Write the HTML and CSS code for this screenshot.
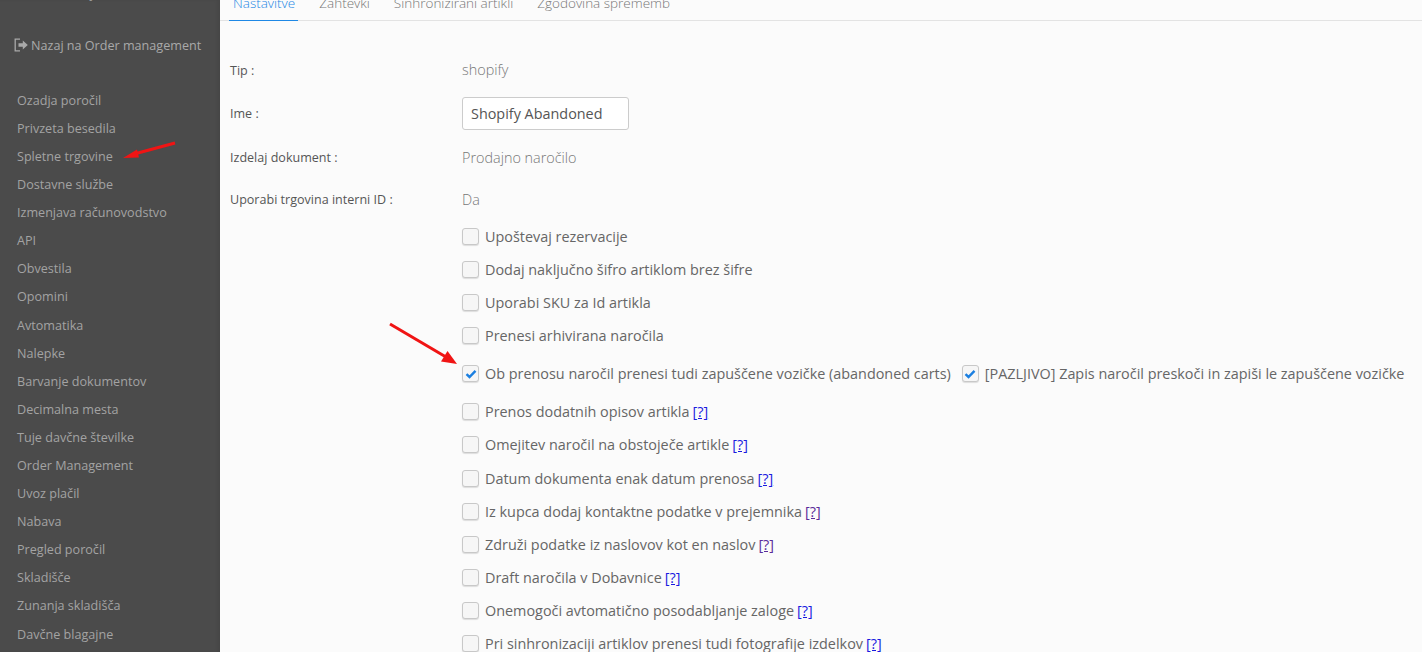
FILE: index.html
```html
<!DOCTYPE html>
<html lang="en">
<head>
    <meta charset="UTF-8">
    <title>Nastavitve</title>
    <link rel="stylesheet" href="styles.css">
</head>
<body>
    <aside class="sidebar">
        <div class="side-title">Administracija</div>
        <a class="back-link" href="#">
            <svg class="back-icon" viewBox="0 0 14 14" width="14" height="14"><path d="M6 1.2H1.2v11.6H6" fill="none" stroke="currentColor" stroke-width="1.3"/><path d="M4.5 5.2h4.3V2.4L13.8 7l-5 4.6V8.8H4.5z" fill="currentColor"/></svg>
            Nazaj na Order management
        </a>
        <nav class="side-nav">
            <a href="#">Ozadja poročil</a>
            <a href="#">Privzeta besedila</a>
            <a href="#">Spletne trgovine</a>
            <a href="#">Dostavne službe</a>
            <a href="#">Izmenjava računovodstvo</a>
            <a href="#">API</a>
            <a href="#">Obvestila</a>
            <a href="#">Opomini</a>
            <a href="#">Avtomatika</a>
            <a href="#">Nalepke</a>
            <a href="#">Barvanje dokumentov</a>
            <a href="#">Decimalna mesta</a>
            <a href="#">Tuje davčne številke</a>
            <a href="#">Order Management</a>
            <a href="#">Uvoz plačil</a>
            <a href="#">Nabava</a>
            <a href="#">Pregled poročil</a>
            <a href="#">Skladišče</a>
            <a href="#">Zunanja skladišča</a>
            <a href="#">Davčne blagajne</a>
        </nav>
    </aside>

    <main class="content">
        <div class="tabs">
            <a class="tab active" href="#">Nastavitve</a>
            <a class="tab" href="#">Zahtevki</a>
            <a class="tab" href="#">Sinhronizirani artikli</a>
            <a class="tab" href="#">Zgodovina sprememb</a>
        </div>

        <div class="form">
            <div class="row row-tip"><span class="label">Tip :</span><span class="value">shopify</span></div>
            <div class="row row-name"><span class="label">Ime :</span><input class="text-input" type="text" value="Shopify Abandoned"></div>
            <div class="row row-doc"><span class="label">Izdelaj dokument :</span><span class="value">Prodajno naročilo</span></div>
            <div class="row row-id"><span class="label">Uporabi trgovina interni ID :</span><span class="value">Da</span></div>

            <div class="checks">
                <div class="check"><span class="box"></span>Upoštevaj rezervacije</div>
                <div class="check"><span class="box"></span>Dodaj naključno šifro artiklom brez šifre</div>
                <div class="check"><span class="box"></span>Uporabi SKU za Id artikla</div>
                <div class="check"><span class="box"></span>Prenesi arhivirana naročila</div>
                <div class="check check-pair">
                    <span class="pair-item"><span class="box"><svg viewBox="0 0 12 10" width="12" height="10"><path d="M1.5 5.2 4.5 8 10.5 1.8" fill="none" stroke="#1b7fe0" stroke-width="2.4"/></svg></span>Ob prenosu naročil prenesi tudi zapuščene vozičke (abandoned carts)</span>
                    <span class="pair-item"><span class="box"><svg viewBox="0 0 12 10" width="12" height="10"><path d="M1.5 5.2 4.5 8 10.5 1.8" fill="none" stroke="#1b7fe0" stroke-width="2.4"/></svg></span>[PAZLJIVO] Zapis naročil preskoči in zapiši le zapuščene vozičke</span>
                </div>
                <div class="check"><span class="box"></span>Prenos dodatnih opisov artikla <a class="help" href="#">[?]</a></div>
                <div class="check"><span class="box"></span>Omejitev naročil na obstoječe artikle <a class="help" href="#">[?]</a></div>
                <div class="check"><span class="box"></span>Datum dokumenta enak datum prenosa <a class="help" href="#">[?]</a></div>
                <div class="check"><span class="box"></span>Iz kupca dodaj kontaktne podatke v prejemnika <a class="help visited" href="#">[?]</a></div>
                <div class="check"><span class="box"></span>Združi podatke iz naslovov kot en naslov <a class="help visited" href="#">[?]</a></div>
                <div class="check"><span class="box"></span>Draft naročila v Dobavnice <a class="help" href="#">[?]</a></div>
                <div class="check"><span class="box"></span>Onemogoči avtomatično posodabljanje zaloge <a class="help" href="#">[?]</a></div>
                <div class="check"><span class="box"></span>Pri sinhronizaciji artiklov prenesi tudi fotografije izdelkov <a class="help" href="#">[?]</a></div>
            </div>
        </div>
    </main>

    <!-- red arrows drawn on top of the screenshot -->
    <svg class="annotation" width="1422" height="652" viewBox="0 0 1422 652">
        <path d="M175 143 136 153.5" stroke="#f01414" stroke-width="3" fill="none"/>
        <path d="M123 158 137 149.5 139 157.5z" fill="#f01414"/>
        <path d="M390 324 446 357" stroke="#f01414" stroke-width="3" fill="none"/>
        <path d="M457 364 441 361.5 447.5 351z" fill="#f01414"/>
    </svg>
</body>
</html>
```

FILE: styles.css
```css
html, body {
    margin: 0;
    padding: 0;
    height: 652px;
    overflow: hidden;
}

body {
    display: flex;
    font-family: "Open Sans", "Noto Sans", sans-serif;
    font-size: 14.4px;
    color: #555;
    background: #fbfbfb;
}

a {
    text-decoration: none;
}

/* sidebar */
.sidebar {
    width: 220px;
    flex: none;
    background: #4b4b4b;
    box-shadow: inset -3px 0 3px rgba(0, 0, 0, 0.06);
}

.side-title {
    margin-top: -15px;
    padding-left: 17px;
    color: #a3a3a3;
    font-size: 12.6px;
    line-height: 18px;
}

.back-link {
    display: flex;
    align-items: center;
    gap: 3px;
    margin-top: 34px;
    padding-left: 14px;
    color: #a9a9a9;
    font-size: 12.6px;
    line-height: 18px;
}

.back-icon {
    margin-top: -3px;
}

.side-nav {
    margin-top: 31.75px;
}

.side-nav a {
    display: block;
    padding-left: 17px;
    color: #a3a3a3;
    font-size: 12.6px;
    line-height: 28.1px;
}

/* tabs */
.content {
    flex: 1;
    min-width: 0;
    white-space: nowrap;
}

.tabs {
    display: flex;
    height: 20px;
    border-bottom: 1px solid #e3e3e3;
    padding-left: 9px;
}

.tab {
    margin-top: -10px;
    padding: 0 3px 0 4px;
    margin-right: 17px;
    height: 31px;
    line-height: 26px;
    font-size: 13.5px;
    font-weight: 300;
    color: #777;
    box-sizing: border-box;
}

.tab.active {
    color: #1e88e5;
    border-bottom: 1px solid #1e88e5;
}

/* form */
.form {
    padding-left: 10px;
}

.row {
    display: flex;
    align-items: center;
}

.label {
    width: 232px;
    flex: none;
    font-size: 12.55px;
    color: #555;
}

.value {
    color: #777;
    font-size: 14.4px;
    font-weight: 300;
}

.row-tip {
    margin-top: 38px;
    height: 20px;
}

.row-tip .label {
    padding-top: 2px;
}

.row-name {
    margin-top: 18px;
    height: 33px;
}

.row-doc {
    margin-top: 17px;
    height: 20px;
}

.row-id {
    margin-top: 22px;
    height: 20px;
}

.text-input {
    width: 167px;
    height: 33px;
    box-sizing: border-box;
    border: 1px solid #ccc;
    border-radius: 3px;
    padding: 0 8px;
    background: #fff;
    color: #555;
    font-family: inherit;
    font-size: 14.4px;
}

.checks {
    margin-top: 11px;
    padding-left: 232px;
}

.check {
    display: flex;
    align-items: center;
    height: 33.15px;
    font-size: 14.4px;
    color: #666;
}

.check-pair {
    gap: 11px;
    height: 42.7px;
}

.pair-item {
    display: flex;
    align-items: center;
}

.box {
    display: flex;
    align-items: center;
    justify-content: center;
    width: 17px;
    height: 17px;
    flex: none;
    margin-right: 6px;
    box-sizing: border-box;
    border: 1px solid #c8c8c8;
    border-radius: 3px;
    background: #f6f6f6;
    box-shadow: 0 1px 1px rgba(0, 0, 0, 0.12);
}

.help {
    margin-left: 3px;
    color: #1a1ae0;
    text-decoration: underline;
}

.help.visited {
    color: #5a2a9a;
}

.annotation {
    position: absolute;
    top: 0;
    left: 0;
    pointer-events: none;
}
```
